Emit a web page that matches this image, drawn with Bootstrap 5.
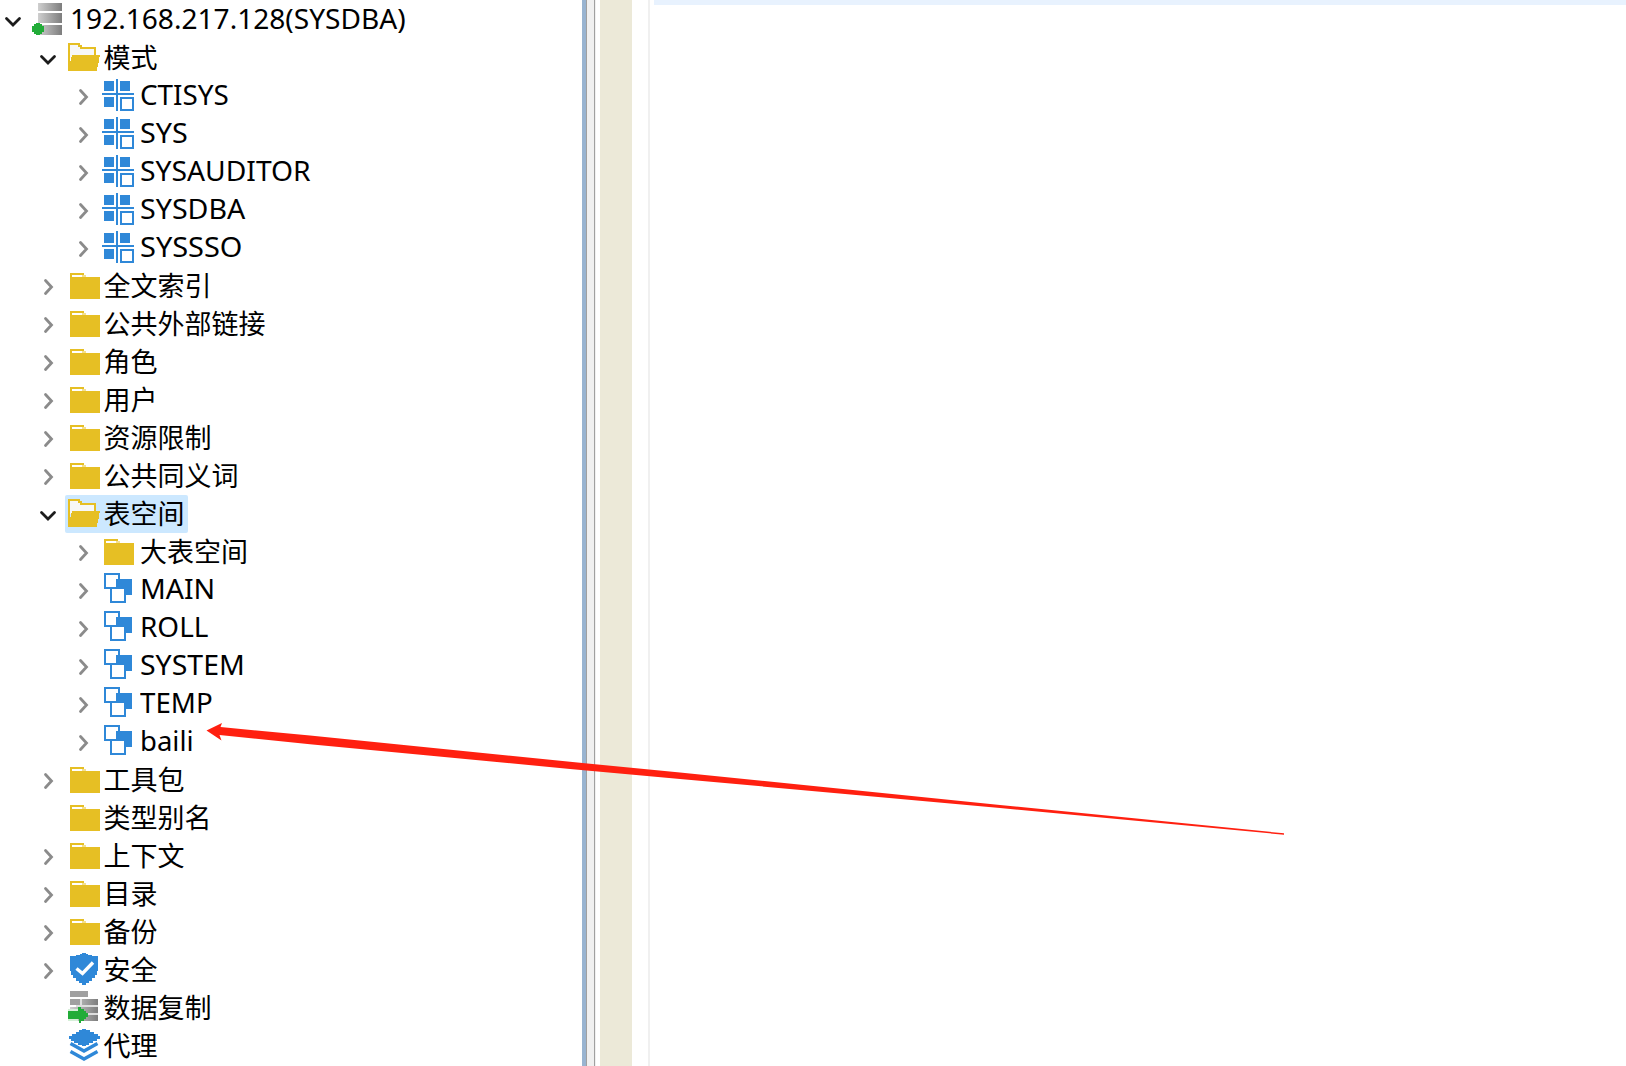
<!DOCTYPE html>
<html lang="zh-CN">
<head>
<meta charset="utf-8">
<title>192.168.217.128(SYSDBA)</title>
<link href="https://cdn.jsdelivr.net/npm/bootstrap@5.3.0/dist/css/bootstrap.min.css" rel="stylesheet">
<style>
body{font-family:"Noto Sans","Noto Sans CJK SC",sans-serif;font-size:27px;color:#000;background:#fff}
.tree-pane{width:582px;padding-top:1px}
.tree-row{height:38px;line-height:38px;white-space:nowrap}
.tree-row svg{display:block;flex:none}
.chev{width:20px;height:38px;fill:none;stroke:#8b8b8b;stroke-width:2.8;stroke-linecap:round;stroke-linejoin:miter}
.chev.open{stroke:#1c1c1c}
.ico{width:32px;height:32px;margin-top:2px}
.lv0{padding-left:3px}.lv1{padding-left:38px}.lv2{padding-left:73px}
.node{height:38px;padding:0 3px;margin-left:7px;border-radius:2px}
.lv0 .node,.lv2 .node{margin-left:6px}
.node.sel{background:#cce8ff}
.cap{margin-left:3.5px;font-size:27px;padding-right:.5px}
.lat{margin-left:6px;font-family:"Noto Sans",sans-serif;font-size:27.5px;transform-origin:0 50%;position:relative;top:-1px}
.lv2 .cap{margin-left:6px}
.sash{width:4px;background:#99b4d1}
.edge{width:1px;background:#a0a0a0}
.edge-soft{width:1px;background:#f0f0f0}
.gap-bar{width:7px;background:#f0f0f0}
.ruler{width:32px;background:#ece9d8}
.fold-line{width:2px;background:#f0f0f0}
.cur-line{height:5px;background:#e8f2fe}
.pointer{left:0;top:0;pointer-events:none}
</style>
<script src="https://cdn.jsdelivr.net/npm/bootstrap@5.3.0/dist/js/bootstrap.bundle.min.js"></script>
</head>
<body class="vh-100 overflow-hidden position-relative">
<svg width="0" height="0" class="position-absolute">
<defs>
<linearGradient id="metal"><stop offset="0" stop-color="#cfcfcf"/><stop offset="1" stop-color="#7d7d7d"/></linearGradient>
<symbol id="i-server" viewBox="0 0 32 32"><path fill="url(#metal)" d="M6 0h24v8H6zM6 10h24v10H6zM6 22h24v10H6z"/><path fill="#22ac38" d="M4 20h4v1h2v2h2v6h-2v2H8v1H4v-1H2v-2H0v-6h2v-2h2z"/></symbol>
<symbol id="i-open" viewBox="0 0 32 32"><path fill="#f7f7f7" d="M1 3h11l2 4h13v10H1z"/><path fill="#e6bf24" d="M0 2h12v2h2v2h14v8h4v2h-1v6h-1v4h-1v4H0zM2 4v16h1v-4h1v-2h22V8H12V6h-2V4z"/></symbol>
<symbol id="i-folder" viewBox="0 0 32 32"><path fill="#f3df91" d="M14 6h4v2h-4z"/><path fill="#e6bf24" d="M2 4h14v2h-2v2h18v22H2z"/><path fill="#fff" d="M4 6h10v2H4z"/></symbol>
<symbol id="i-schema" viewBox="0 0 32 32"><path fill="#2f88d8" d="M2 2h10v10H2zM18 2h10v10H18zM2 18h10v10H2zM14 0h2v32h-2zM0 14h32v2H0z"/><path fill="#fff" stroke="#2f88d8" stroke-width="2" d="M19 19h12v12H19z"/></symbol>
<symbol id="i-space" viewBox="0 0 32 32"><path fill="#fff" stroke="#2f88d8" stroke-width="2" d="M3 1h14v14H3z"/><path fill="#2f88d8" d="M14 6h16v16H14z"/><path fill="#fff" stroke="#2f88d8" stroke-width="2" d="M9 15h14v14H9z"/></symbol>
<symbol id="i-shield" viewBox="0 0 32 32"><path fill="#2f88d8" d="M14 0h4v1h2v1h4v1h6v15h-1v4h-2v3h-3v3h-3v2h-3v2h-4v-2h-3v-2H8v-3H5v-3H3v-4H2V3h6V2h4V1h2z"/><path fill="none" stroke="#fff" stroke-width="3.400" d="M8.500 15.500l6 5L25 9.500"/></symbol>
<symbol id="i-copy" viewBox="0 0 32 32"><path fill="#dedede" d="M10 8h20v22H8V14h2z"/><path fill="#a0a0a0" d="M2 0h18v6H2zM2 8h10v6H2z"/><path fill="url(#metal)" d="M14 8h16v6H14zM2 16h28v6H2zM8 24h22v6H8z"/><path fill="#d5efd8" d="M0 18h10v2H0zM0 28h10v2H0z"/><path fill="#22ac38" d="M0 20h10v-4h3v2h3v2h2v2h2v4h-2v2h-2v2h-3v2h-2v-4H0z"/></symbol>
<symbol id="i-stack" viewBox="0 0 32 32"><path fill="#2f88d8" d="M14 0h4v1h4v2h4v2h4v2h2v3h-3v2h-4v2h-4v2h-3v1h-4v-1h-4v-2H6v-2H3v-2H1V7h3V5h4V3h3V1h3z"/><path fill="none" stroke="#2f88d8" stroke-width="3.400" d="M2.500 14.500L16 22l13.500-7.500M2.500 22.500L16 30l13.500-7.500"/></symbol>
</defs></svg>
<main class="d-flex h-100">
<nav class="tree-pane flex-shrink-0" id="tree"></nav>
<div class="sash"></div><div class="edge"></div><div class="gap-bar"></div><div class="edge"></div><div class="edge-soft"></div>
<div class="ruler ms-1"></div>
<div class="fold-line ms-3"></div>
<section class="flex-grow-1 ms-1"><div class="cur-line"></div></section>
</main>
<svg class="pointer position-absolute" width="1626" height="1066"><path fill="#ff2010" d="M206.500 730.500L222 723l-1.500 4L310 735.600 570 761.800 680 772.500 1000 805 1284 833.300v1.400L1000 808 680 779 570 769 310 744.200 219.500 735l2 5.500z"/></svg>
<script>
// [level, state, icon, label, drawn width for Latin labels, selected]
const rows=[
[0,'o','server','192.168.217.128(SYSDBA)',336],
[1,'o','open','模式'],
[2,'c','schema','CTISYS',89],[2,'c','schema','SYS',48],[2,'c','schema','SYSAUDITOR',170.5],[2,'c','schema','SYSDBA',105],[2,'c','schema','SYSSSO',102],
[1,'c','folder','全文索引'],[1,'c','folder','公共外部链接'],[1,'c','folder','角色'],[1,'c','folder','用户'],[1,'c','folder','资源限制'],[1,'c','folder','公共同义词'],
[1,'o','open','表空间',0,1],
[2,'c','folder','大表空间'],
[2,'c','space','MAIN',75.5],[2,'c','space','ROLL',68],[2,'c','space','SYSTEM',104.5],[2,'c','space','TEMP',72.5],[2,'c','space','baili',54],
[1,'c','folder','工具包'],[1,'','folder','类型别名'],[1,'c','folder','上下文'],[1,'c','folder','目录'],[1,'c','folder','备份'],
[1,'c','shield','安全'],[1,'','copy','数据复制'],[1,'','stack','代理']];
const arrows={o:'<path d="M3.500 17.500l6.500 6.500 6.500-6.500"/>',c:'<path d="M7.500 13.500l6 6.500-6 6.500"/>','':''};
const tree=document.getElementById('tree');
tree.innerHTML=rows.map(([l,s,i,t,w,sel])=>`<div class="tree-row d-flex lv${l}"><svg class="chev ${s==='o'?'open':''}" viewBox="0 0 20 38">${arrows[s]}</svg><div class="node d-flex ${sel?'sel':''}"><svg class="ico" shape-rendering="${i==='shield'||i==='stack'?'auto':'crispEdges'}"><use href="#i-${i}"/></svg><span class="${w?'lat':'cap'}" ${w?`data-w="${w}"`:''}>${t}</span></div></div>`).join('');
// keep Latin captions at their intended advance
document.querySelectorAll('.lat').forEach(e=>{e.style.transform=`scaleX(${e.dataset.w/e.offsetWidth})`});
</script>
</body>
</html>
